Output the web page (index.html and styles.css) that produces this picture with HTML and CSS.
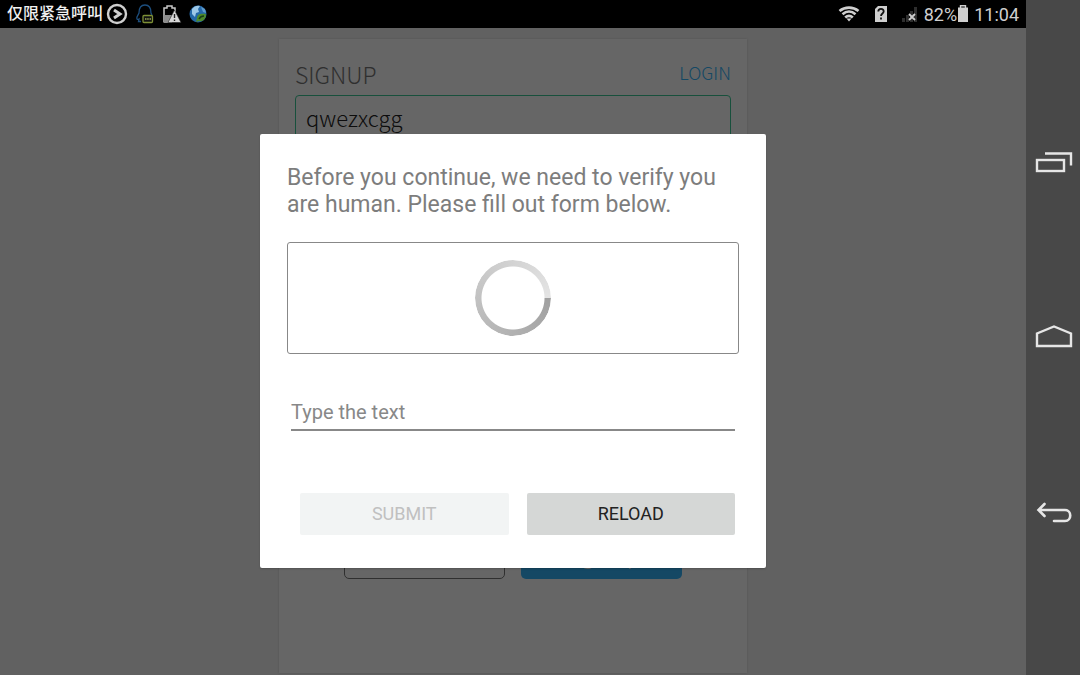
FILE: index.html
```
<!DOCTYPE html>
<html lang="en">
<head>
	<meta charset="UTF-8">
	<title>Signup</title>
	<link rel="stylesheet" href="styles.css">
</head>
<body>
	<div class="screen">
		<header class="status">
			<div class="status-left">
				<span class="carrier" lang="zh">仅限紧急呼叫</span>
				<svg width="22" height="22" viewBox="0 0 22 22" fill="none" stroke="#cfcfcf">
					<circle cx="11" cy="11" r="9" stroke-width="2.400"/>
					<path d="M8 7l6 4-6 4" stroke-width="3"/>
				</svg>
				<svg width="20" height="22" viewBox="0 0 20 22" fill="none">
					<path d="M6 18.500H3.500L4 16c-2 1-2.500 0-2-2l2-4c0-5 2-8 6-8s6 3 6 8l1 2" stroke="#1d4f7f" stroke-width="1.300"/>
					<rect x="8" y="12.500" width="9.500" height="7" rx="1" fill="#111" stroke="#7d8f35" stroke-width="1.300"/>
					<path d="M10 16h1.500M12.200 16h1.500M14.500 16H16" stroke="#9aa855" stroke-width="1.300"/>
				</svg>
				<svg width="20" height="22" viewBox="0 0 20 22">
					<path d="M2 19.500V5h3V3h5v2h3v4" fill="none" stroke="#c8c8c8" stroke-width="1.500"/>
					<path d="M2 12h8v8H2z" fill="#8c8c8c"/>
					<path d="M12.500 7L19 19.500H6z" fill="#d8d8d8" stroke="#222" stroke-width=".6"/>
					<path d="M12.500 11v4M12.500 16.500v1.500" stroke="#222" stroke-width="1.400"/>
				</svg>
				<svg width="20" height="22" viewBox="0 0 20 22">
					<circle cx="9" cy="11" r="8.500" fill="#2468a8"/>
					<path d="M3 6c2-3 6-4 8-3l-2 3 1 3-3 1-1 4-3-3z" fill="#9cc8e8"/>
					<path d="M12 4l4 2 1 4-3-1z" fill="#5f9bcc"/>
					<path d="M8 15c0-4 4-5 9-4 0 5-3 8-7 7l-3 1z" fill="#4d8a2b"/>
					<path d="M10 16c1-2 3-3 5-3" fill="none" stroke="#173d16" stroke-width="1.500"/>
				</svg>
			</div>
			<div class="status-right">
				<svg class="wifi" width="22" height="18" viewBox="0 0 22 18" fill="none" stroke="#cfcfcf" stroke-width="2.700">
					<path d="M1.500 6c5.500-4.500 13.500-4.500 19 0"/>
					<path d="M4.500 9.300c4-3.500 9-3.500 13 0"/>
					<path d="M7.200 12.500c2.500-2.200 5.100-2.200 7.600 0"/>
					<path d="M8.500 13.500h5L11 16.500z" fill="#cfcfcf" stroke="none"/>
				</svg>
				<svg class="sim" width="14" height="18" viewBox="0 0 14 18">
					<path d="M4 1h9v16H1V4z" fill="#cfcfcf"/>
					<path d="M4.300 6.500c0-3.500 5.400-3.500 5.400 0 0 2-2.700 2-2.700 4.500M7 12.500v2" fill="none" stroke="#111" stroke-width="1.800"/>
				</svg>
				<svg class="signal" width="18" height="18" viewBox="0 0 18 18">
					<path d="M1 13h3v4H1zM5 10h3v7H5zM9 6h3v11H9zM13 2h3v15h-3z" fill="#2e2e2e"/>
					<path d="M8 9l6 6M14 9l-6 6" stroke="#cfcfcf" stroke-width="1.800"/>
				</svg>
				<span>82%</span>
				<svg class="battery" width="12" height="20" viewBox="0 0 12 20">
					<path d="M3.500 4V1.700h5V4" fill="none" stroke="#cfcfcf" stroke-width="1.400"/>
					<path d="M1 3.500h10V18H1z" fill="#cfcfcf"/>
				</svg>
				<span>11:04</span>
			</div>
		</header>

		<main class="content">
			<form class="card">
				<div class="card-head">
					<h1>SIGNUP</h1>
					<a href="#">LOGIN</a>
				</div>
				<input class="username" type="text" value="qwezxcgg" aria-label="Username">
				<div class="card-buttons">
					<button type="button" class="cancel" aria-label="Cancel"></button>
					<button type="submit" class="signup">Sign Up</button>
				</div>
			</form>

			<div class="overlay">
				<form class="dialog" role="dialog" aria-labelledby="verify-text">
					<p id="verify-text">Before you continue, we need to verify you are human. Please fill out form below.</p>
					<div class="captcha"><div class="spinner"></div></div>
					<input class="answer" type="text" placeholder="Type the text" aria-label="Type the text">
					<div class="dialog-buttons">
						<button type="submit" disabled>SUBMIT</button>
						<button type="button">RELOAD</button>
					</div>
				</form>
			</div>
		</main>
	</div>

	<nav class="navbar">
		<a href="#" aria-label="Recent apps">
			<svg width="40" height="28" viewBox="0 0 40 28" fill="none" stroke="#e6e6e6" stroke-width="2.400">
				<rect x="3" y="12" width="27" height="11"/>
				<path d="M11 5.500h26v12"/>
			</svg>
		</a>
		<a href="#" aria-label="Home">
			<svg width="40" height="28" viewBox="0 0 40 28" fill="none" stroke="#e6e6e6" stroke-width="2.400">
				<path d="M3 22V9.500l17-7 17 7V22z"/>
			</svg>
		</a>
		<a href="#" aria-label="Back">
			<svg width="40" height="28" viewBox="0 0 40 28" fill="none" stroke="#e6e6e6" stroke-width="2.600" stroke-linecap="round">
				<path d="M10.500 5L4.500 11l6 6M4.500 11H31c7 0 7 11 0 11H20"/>
			</svg>
		</a>
	</nav>
</body>
</html>
```
FILE: styles.css
```
*{margin: 0; padding: 0; box-sizing: border-box;}
body{
	display: flex;
	min-height: 100vh;
	font-family: Roboto, "Noto Sans CJK SC", sans-serif;
	background: #484848;
}
button, input{
	font-family: inherit;
	border: none;
	outline: none;
}
svg{
	display: block;
	flex: none;
}
.screen{
	flex: 1;
	display: flex;
	flex-direction: column;
}

/* status bar */
.status{
	display: flex;
	justify-content: space-between;
	align-items: center;
	height: 28px;
	padding: 0 7px;
	background: #000;
	color: #cfcfcf;
	font-size: 18px;
}
.status-left, .status-right{
	display: flex;
	align-items: center;
}
.status-left{
	gap: 7px;
}
.carrier{
	margin-right: -4px;
	font-size: 16px;
	font-weight: 500;
	line-height: 24px;
	color: #f0f0f0;
}
.sim{margin-left: 14px;}
.signal{margin: 0 5px 0 13px;}
.battery{margin-right: 5px;}

/* signup page */
.content{
	position: relative;
	flex: 1;
	display: flex;
	justify-content: center;
	padding: 11px 20px 2px;
	background: #f2f2f2;
}
.card{
	display: flex;
	flex-direction: column;
	width: 468px;
	padding: 20px 16px 94px;
	background: #fff;
	box-shadow: 0 0 2px #ccc;
	font-family: "Noto Sans CJK SC", sans-serif;
	font-weight: 300;
}
.card-head{
	display: flex;
	justify-content: space-between;
	height: 36px;
}
.card-head h1{
	font-size: 23px;
	font-weight: 300;
	line-height: 30px;
	color: #777;
}
.card-head a{
	font-size: 18px;
	line-height: 26px;
	color: #36b4fa;
	text-decoration: none;
}
.username{
	height: 44px;
	padding: 0 10px;
	border: 1px solid #3cc896;
	border-radius: 4px;
	font-size: 22px;
	font-weight: 300;
	color: #222;
}
.card-buttons{
	display: flex;
	justify-content: center;
	gap: 16px;
	margin-top: auto;
}
.card-buttons button{
	width: 161px;
	height: 42px;
	border-radius: 5px;
	font-size: 22px;
	font-weight: 300;
}
.cancel{
	background: #fff;
	border: 1px solid #777;
}
.card-buttons .signup{
	padding-bottom: 10px;
	background: #36b4fa;
	color: #fff;
}

/* verify dialog */
.overlay{
	position: absolute;
	inset: 0;
	display: flex;
	justify-content: center;
	align-items: center;
	padding-bottom: 2px;
	background: rgba(0,0,0,.6);
}
.dialog{
	width: 506px;
	padding: 30px 27px 33px;
	background: #fff;
	border-radius: 2px;
	box-shadow: 0 1px 2px rgba(0,0,0,.2);
}
.dialog p{
	font-size: 23px;
	line-height: 27px;
	color: #7d7d7d;
}
.captcha{
	display: flex;
	justify-content: center;
	align-items: center;
	height: 112px;
	margin-top: 24px;
	border: 1px solid #888;
	border-radius: 3px;
}
.spinner{
	width: 76px;
	height: 76px;
	border-radius: 50%;
	background: conic-gradient(from 90deg, #a0a0a0, #e4e4e4);
	-webkit-mask: radial-gradient(circle, transparent 31px, #000 32px);
	mask: radial-gradient(circle, transparent 31px, #000 32px);
}
.answer{
	display: block;
	width: calc(100% - 8px);
	height: 35px;
	margin: 42px 4px 0;
	border-bottom: 2px solid #888;
	font-size: 20px;
	color: #222;
}
.answer::placeholder{
	color: #888;
}
.dialog-buttons{
	display: flex;
	gap: 18px;
	margin: 62px 4px 0 13px;
}
.dialog-buttons button{
	flex: 1;
	height: 42px;
	border-radius: 2px;
	background: #d5d7d6;
	font-size: 18px;
	color: #222;
}
.dialog-buttons button:disabled{
	background: #f2f4f4;
	color: #c0c0c0;
}

/* system navigation */
.navbar{
	display: flex;
	flex-direction: column;
	justify-content: space-evenly;
	align-items: center;
	width: 54px;
	padding-left: 2px;
}
```
